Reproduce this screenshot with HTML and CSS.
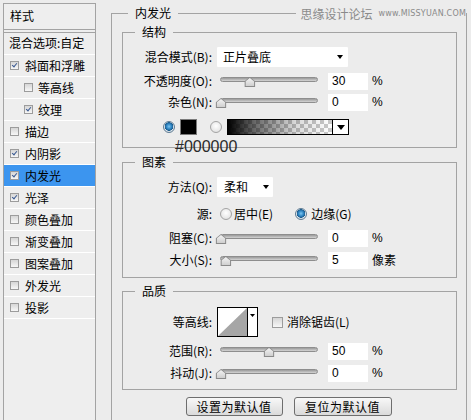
FILE: index.html
```html
<!DOCTYPE html>
<html lang="zh-CN">
<head>
<meta charset="utf-8">
<title>图层样式 - 内发光</title>
<link rel="stylesheet" href="styles.css">
</head>
<body>
<div class="dialog">
  <aside class="styles-panel">
    <div class="sp-head">样式</div>
    <div class="sp-blend">混合选项:自定</div>
    <ul class="sp-list">
      <li class="sp-item"><span class="cb on"></span>斜面和浮雕</li>
      <li class="sp-item sub"><span class="cb"></span>等高线</li>
      <li class="sp-item sub"><span class="cb on"></span>纹理</li>
      <li class="sp-item"><span class="cb"></span>描边</li>
      <li class="sp-item"><span class="cb on"></span>内阴影</li>
      <li class="sp-item active"><span class="cb on"></span>内发光</li>
      <li class="sp-item"><span class="cb on"></span>光泽</li>
      <li class="sp-item"><span class="cb"></span>颜色叠加</li>
      <li class="sp-item"><span class="cb"></span>渐变叠加</li>
      <li class="sp-item"><span class="cb"></span>图案叠加</li>
      <li class="sp-item"><span class="cb"></span>外发光</li>
      <li class="sp-item"><span class="cb"></span>投影</li>
    </ul>
  </aside>

  <main class="main">
    <div class="main-title">内发光</div>
    <div class="watermark"><span class="wm-cn">思缘设计论坛</span><span class="wm-en">www.MISSYUAN.COM</span></div>

    <section class="group g-structure">
      <div class="group-title">结构</div>
      <div class="row row-tall">
        <span class="label">混合模式(B):</span>
        <div class="select select-blend"><span>正片叠底</span><span class="caret"></span></div>
      </div>
      <div class="row r-opacity">
        <span class="label">不透明度(O):</span>
        <div class="slider"><div class="track"><span class="thumb" style="left:30%"></span></div></div>
        <span class="num">30</span><span class="unit">%</span>
      </div>
      <div class="row r-noise">
        <span class="label">杂色(N):</span>
        <div class="slider"><div class="track"><span class="thumb" style="left:0%"></span></div></div>
        <span class="num">0</span><span class="unit">%</span>
      </div>
      <div class="row r-color">
        <span class="radio on"></span>
        <span class="swatch"></span>
        <span class="radio r-grad"></span>
        <div class="grad"><span class="grad-fill"></span><span class="grad-btn"><span class="caret"></span></span></div>
      </div>
      <div class="hex-note">#000000</div>
    </section>

    <section class="group g-elements">
      <div class="group-title">图素</div>
      <div class="row row-tall">
        <span class="label">方法(Q):</span>
        <div class="select select-method"><span>柔和</span><span class="caret"></span></div>
      </div>
      <div class="row r-source">
        <span class="label">源:</span>
        <span class="opt"><span class="radio"></span>居中(E)</span>
        <span class="opt opt-edge"><span class="radio on"></span>边缘(G)</span>
      </div>
      <div class="row r-choke">
        <span class="label">阻塞(C):</span>
        <div class="slider"><div class="track"><span class="thumb" style="left:0%"></span></div></div>
        <span class="num">0</span><span class="unit">%</span>
      </div>
      <div class="row r-size">
        <span class="label">大小(S):</span>
        <div class="slider"><div class="track"><span class="thumb" style="left:5%"></span></div></div>
        <span class="num">5</span><span class="unit unit-cn">像素</span>
      </div>
    </section>

    <section class="group g-quality">
      <div class="group-title">品质</div>
      <div class="row row-contour">
        <span class="label">等高线:</span>
        <div class="contour">
          <svg width="39" height="28" viewBox="0 0 39 28">
            <polygon points="0,28 29,0 29,28" fill="#a6a6a6"/>
            <line x1="29.5" y1="0" x2="29.5" y2="28" stroke="#000" stroke-width="1"/>
            <polygon points="32,6 37,6 34.5,9" fill="#000"/>
          </svg>
        </div>
        <span class="cb cb-lg"></span><span class="cb-text">消除锯齿(L)</span>
      </div>
      <div class="row r-range">
        <span class="label">范围(R):</span>
        <div class="slider"><div class="track"><span class="thumb" style="left:50%"></span></div></div>
        <span class="num">50</span><span class="unit">%</span>
      </div>
      <div class="row r-jitter">
        <span class="label">抖动(J):</span>
        <div class="slider"><div class="track"><span class="thumb" style="left:0%"></span></div></div>
        <span class="num">0</span><span class="unit">%</span>
      </div>
    </section>

    <div class="actions">
      <button class="btn btn-set">设置为默认值</button>
      <button class="btn btn-reset">复位为默认值</button>
    </div>
  </main>
</div>
</body>
</html>
```

FILE: styles.css
```css
html, body {
  margin: 0;
  padding: 0;
}
body {
  width: 471px;
  height: 420px;
  overflow: hidden;
  background: #ececec;
  color: #000;
  font-family: "Noto Sans CJK SC", "Noto Sans", sans-serif;
  font-size: 12px;
  line-height: 14px;
}
.dialog {
  display: flex;
  align-items: flex-start;
}

/* ---------- left styles list ---------- */
.styles-panel {
  flex: none;
  box-sizing: border-box;
  width: 93px;
  height: 430px;
  margin: 3px 0 0 3px;
  border: 1px solid #a3a3a3;
  background: #eeeeee;
}
.sp-head {
  height: 25px;
  line-height: 23px;
  padding-left: 6px;
  border-bottom: 1px solid #a3a3a3;
}
.sp-blend {
  margin-top: 2px;
  height: 21px;
  line-height: 20px;
  padding-left: 5px;
  border-top: 1px solid #a3a3a3;
  border-bottom: 1px solid #fff;
  white-space: nowrap;
}
.sp-list {
  list-style: none;
  margin: 0;
  padding: 0;
}
.sp-item {
  display: flex;
  align-items: center;
  gap: 6px;
  height: 21px;
  padding-left: 6px;
  border-bottom: 1px solid #fff;
  white-space: nowrap;
}
.sp-item.sub {
  padding-left: 20px;
  gap: 5px;
}
.sp-item.active {
  background: #3c95ef;
}

.cb {
  position: relative;
  flex: none;
  box-sizing: border-box;
  width: 9px;
  height: 9px;
  border: 1px solid #9c9c9c;
  background: linear-gradient(#d6d6d6, #f7f7f7);
}
.cb.on::after {
  content: "";
  position: absolute;
  left: 2px;
  top: 0;
  width: 2px;
  height: 4px;
  border: solid #3a5a92;
  border-width: 0 1.5px 1.5px 0;
  transform: rotate(40deg);
}
.cb-lg {
  width: 11px;
  height: 11px;
  margin-left: 14px;
}
.cb-text {
  margin-left: 4px;
}

/* ---------- main panel ---------- */
.main {
  position: relative;
  flex: none;
  box-sizing: border-box;
  width: 356px;
  height: 420px;
  margin: 13px 0 0 15px;
  padding: 18px 9px 0 10px;
  border: 1px solid #a3a3a3;
}
.main-title {
  position: absolute;
  top: -8px;
  left: 16px;
  padding: 0 7px;
  background: #ececec;
  line-height: 14px;
}
.watermark {
  position: absolute;
  top: -7px;
  right: 0;
  display: flex;
  align-items: center;
  gap: 6px;
  padding-left: 4px;
  background: #ececec;
  color: #8a8a8a;
  line-height: 14px;
}
.wm-cn {
  font-size: 12px;
}
.wm-en {
  font-family: "DejaVu Sans", sans-serif;
  font-size: 8px;
  letter-spacing: 0.2px;
}

.group {
  position: relative;
  border: 1px solid #a3a3a3;
}
.group-title {
  position: absolute;
  top: -8px;
  left: 12px;
  padding: 0 7px;
  background: #ececec;
  line-height: 14px;
}
.g-structure {
  padding: 14px 0 11px;
}
.g-elements {
  margin-top: 14px;
  padding: 14px 0 8px;
}
.g-quality {
  margin-top: 13px;
  padding: 15px 0 7px;
}

.row {
  display: flex;
  align-items: center;
  height: 18px;
  white-space: nowrap;
}
.row-tall {
  height: 20px;
}
.r-opacity { margin-top: 5px; }
.r-noise { margin-top: 3px; }
.r-color { margin-top: 7px; padding-left: 40px; }
.r-source { margin-top: 8px; }
.r-choke { margin-top: 6px; }
.r-size { margin-top: 4px; }
.row-contour { height: 30px; }
.r-range { margin-top: 5px; }
.r-jitter { margin-top: 4px; }

.label {
  flex: none;
  box-sizing: border-box;
  width: 94px;
  padding-right: 5px;
  text-align: right;
}

/* dropdowns */
.select {
  box-sizing: border-box;
  display: flex;
  align-items: center;
  justify-content: space-between;
  height: 20px;
  background: #fff;
  border-radius: 1px;
}
.select-blend {
  width: 131px;
  padding: 0 5px 0 6px;
}
.select-method {
  width: 56px;
  padding: 0 4px 0 7px;
}
.caret {
  width: 0;
  height: 0;
  border-left: 3.5px solid transparent;
  border-right: 3.5px solid transparent;
  border-top: 4px solid #000;
}

/* sliders */
.slider {
  flex: none;
  width: 111px;
  height: 18px;
}
.track {
  position: relative;
  box-sizing: border-box;
  width: 98px;
  height: 5px;
  margin: 5px 0 0 3px;
  border-radius: 3px;
  border: 1px solid #8e8e8e;
  background: linear-gradient(#9a9a9a, #d4d4d4);
}
.thumb {
  position: absolute;
  top: -1px;
  width: 11px;
  height: 10px;
  transform: translateX(-50%);
  background: #8a8a8a;
  clip-path: polygon(50% 0, 100% 45%, 100% 100%, 0 100%, 0 45%);
}
.thumb::after {
  content: "";
  position: absolute;
  inset: 1px;
  background: linear-gradient(#f4f4f4, #cfcfcf);
  clip-path: polygon(50% 0, 100% 45%, 100% 100%, 0 100%, 0 45%);
}

.num {
  box-sizing: border-box;
  width: 40px;
  height: 17px;
  padding-left: 4px;
  background: #fff;
  font-family: "Liberation Sans", Arial, sans-serif;
  font-size: 12px;
  line-height: 17px;
}
.unit {
  margin-left: 4px;
  font-family: "Liberation Sans", Arial, sans-serif;
  font-size: 12px;
}
.unit-cn {
  font-family: "Noto Sans CJK SC", sans-serif;
}

/* radios */
.radio {
  flex: none;
  box-sizing: border-box;
  width: 12px;
  height: 12px;
  border-radius: 50%;
  border: 1px solid #a4a4a4;
  background: radial-gradient(circle at 50% 40%, #ffffff 0, #e6e6e6 70%, #cfcfcf 100%);
}
.radio.on {
  border-color: #5f7c93;
  background: radial-gradient(circle at 50% 45%, #7cc6f2 0, #2f85c2 35%, #1d5d8e 55%, #dfe7ee 60%, #c6ced6 100%);
}
.opt {
  display: flex;
  align-items: center;
  gap: 2px;
  margin-left: 3px;
}
.opt-edge {
  margin-left: 22px;
  gap: 4px;
}

/* color row */
.swatch {
  box-sizing: border-box;
  width: 17px;
  height: 16px;
  margin-left: 5px;
  background: #000;
  border: 1px solid #7a7a7a;
}
.r-grad {
  margin-left: 13px;
}
.grad {
  display: flex;
  box-sizing: border-box;
  width: 122px;
  height: 16px;
  margin-left: 5px;
  border: 1px solid #000;
}
.grad-fill {
  flex: 1;
  background:
    linear-gradient(to right, #000 0%, rgba(0,0,0,0.6) 25%, rgba(0,0,0,0.15) 65%, rgba(0,0,0,0) 100%),
    repeating-conic-gradient(#c9c9c9 0% 25%, #ffffff 0% 50%) 0 0 / 8px 8px;
}
.grad-btn {
  display: flex;
  align-items: center;
  justify-content: center;
  width: 15px;
  border-left: 1px solid #000;
  background: #fff;
}
.grad-btn .caret {
  border-left-width: 4px;
  border-right-width: 4px;
  border-top-width: 5px;
}
.hex-note {
  position: absolute;
  left: 52px;
  top: 105px;
  font-family: "Liberation Sans", Arial, sans-serif;
  font-size: 16px;
  line-height: 18px;
  color: #2a2a2a;
}

/* contour */
.contour {
  box-sizing: border-box;
  width: 41px;
  height: 30px;
  border: 1px solid #000;
  background: #fff;
}
.contour svg {
  display: block;
}

/* buttons */
.actions {
  display: flex;
  justify-content: center;
  gap: 11px;
  margin-top: 7px;
  padding-right: 2px;
}
.btn {
  box-sizing: border-box;
  height: 19px;
  padding: 0;
  border: 1px solid #6e6e6e;
  border-radius: 3px;
  background: linear-gradient(#f8f8f8, #dadada);
  font-family: "Noto Sans CJK SC", sans-serif;
  font-size: 12px;
  line-height: 16px;
  color: #000;
  letter-spacing: 0.5px;
}
.btn-set { width: 97px; }
.btn-reset { width: 98px; }
```
